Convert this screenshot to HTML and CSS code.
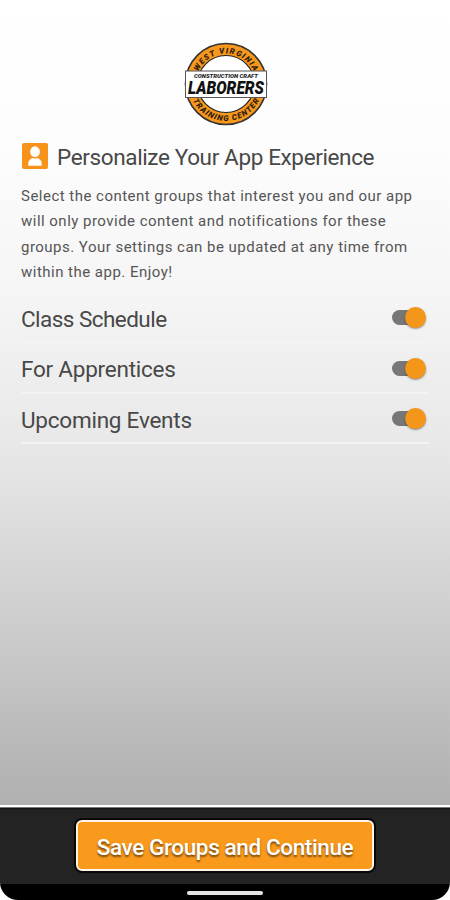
FILE: index.html
```html
<!DOCTYPE html>
<html lang="en">
<head>
<meta charset="utf-8">
<title>Personalize Your App Experience</title>
<link rel="stylesheet" href="styles.css">
</head>
<body>
<div class="screen">
  <main class="content">
    <svg class="logo" viewBox="0 0 84 84" width="84" height="84">
      <defs>
        <path id="top" d="M11.5 42a30.5 30.5 0 0 1 61 0"/>
        <path id="bottom" d="M5 42a37 37 0 0 0 74 0"/>
      </defs>
      <circle cx="42" cy="42" r="40.5" fill="#f7981d" stroke="#333" stroke-width="1.6"/>
      <circle cx="42" cy="42" r="28.5" fill="#fff" stroke="#222" stroke-width="1.2"/>
      <text class="ring"><textPath href="#top" startOffset="50%" text-anchor="middle" textLength="70">WEST VIRGINIA</textPath></text>
      <text class="ring"><textPath href="#bottom" startOffset="50%" text-anchor="middle" textLength="82">TRAINING CENTER</textPath></text>
      <rect x="1.5" y="29" width="81" height="26.5" fill="#fff" stroke="#555"/>
      <text class="craft" x="10" y="36" textLength="64" lengthAdjust="spacingAndGlyphs">CONSTRUCTION CRAFT</text>
      <text class="laborers" x="4" y="51.5" textLength="76" lengthAdjust="spacingAndGlyphs">LABORERS</text>
    </svg>
    <header class="heading">
      <svg width="26" height="26" viewBox="0 0 26 26">
        <rect width="26" height="26" rx="2" fill="#f7931a"/>
        <ellipse cx="13" cy="8.7" rx="4.9" ry="5.4" fill="#fff"/>
        <path d="M6.3 22.7v-2.2c0-3 2-4.5 4.5-5.4q2.2 1 4.4 0c2.5.9 4.5 2.4 4.5 5.4v2.2z" fill="#fff"/>
      </svg>
      <h1>Personalize Your App Experience</h1>
    </header>
    <p class="intro">
      <span>Select the content groups that interest you and our app</span>
      <span>will only provide content and notifications for these</span>
      <span>groups. Your settings can be updated at any time from</span>
      <span>within the app. Enjoy!</span>
    </p>
    <ul class="groups">
      <li><span class="tight">Class Schedule</span><i class="toggle"></i></li>
      <li><span>For Apprentices</span><i class="toggle"></i></li>
      <li><span>Upcoming Events</span><i class="toggle"></i></li>
    </ul>
  </main>
  <footer class="bar"><button>Save Groups and Continue</button></footer>
  <div class="system"><i></i></div>
</div>
</body>
</html>
```
FILE: styles.css
```css
* { box-sizing: border-box; }
body { margin: 0; background: #fff; font-family: Roboto, "Noto Sans", sans-serif; color: #484848; }
.screen { height: 900px; display: flex; flex-direction: column; overflow: hidden; border-radius: 0 0 18px 18px; }
.content { flex: 1; padding: 42px 21px 0; background: linear-gradient(#fff 0, #fdfdfd 140px, #f5f5f5 295px, #e8e8e8 445px, #d1d1d1 600px, #bdbdbd 720px, #b0b0b0 805px); }
.logo { display: block; margin: 0 auto; transform: translateX(1px); }
.ring { font: italic 900 8px Roboto, sans-serif; fill: #30200c; }
.craft { font: italic 900 6px Roboto, sans-serif; fill: #222; }
.laborers { font: italic 900 17.5px Roboto, sans-serif; fill: #111; }
.heading { display: flex; align-items: center; gap: 10px; height: 26px; margin-top: 17px; padding-left: 1px; }
.heading svg { flex: none; }
h1 { margin: 2px 0 0 -1px; font-size: 22.5px; font-weight: 400; line-height: 26px; white-space: nowrap; letter-spacing: -.37px; }
.intro { margin: 15px 0 0; font-size: 15px; line-height: 25.3px; color: #555; }
.intro span { display: block; white-space: nowrap; width: max-content; letter-spacing: .48px; }
.groups { list-style: none; margin: 8px 0 0; padding: 0; }
.groups li { display: flex; justify-content: space-between; align-items: center; height: 50.4px; padding-top: 1px; border-bottom: 2px solid #f3f3f3; font-size: 22.5px; white-space: nowrap; }
.groups span { letter-spacing: -.23px; padding-top: 2px; }
.groups .tight { letter-spacing: -.54px; }
.toggle { width: 34px; height: 21px; margin-right: 3px; display: flex; align-items: center; justify-content: flex-end; position: relative; }
.toggle::before { content: ""; position: absolute; left: 0; top: 3px; width: 24px; height: 15px; border-radius: 8px; background: #777; }
.toggle::after { content: ""; position: relative; width: 21px; height: 21px; border-radius: 50%; background: #f39619; box-shadow: 0 1px 2px #0006; }
.bar { height: 79px; border-top: 2px solid #fff; background: linear-gradient(#777 0 1px, #151515 1px 2px, #232323 3px); display: flex; justify-content: center; padding-top: 13px; }
button { width: 298px; height: 51px; border: 2px solid #fff5e8; border-radius: 6px; background: #f99a1c; box-shadow: 0 0 0 2px #080808; color: #fff; font: 500 22.5px Roboto, "Noto Sans", sans-serif; letter-spacing: -.38px; text-shadow: 0 2px 2px #0008; padding: 2px 0 0; white-space: nowrap; }
.system { height: 16px; background: #000; display: flex; justify-content: center; padding-top: 7px; }
.system i { width: 76px; height: 4px; border-radius: 2px; background: #e4e4e4; }
```
